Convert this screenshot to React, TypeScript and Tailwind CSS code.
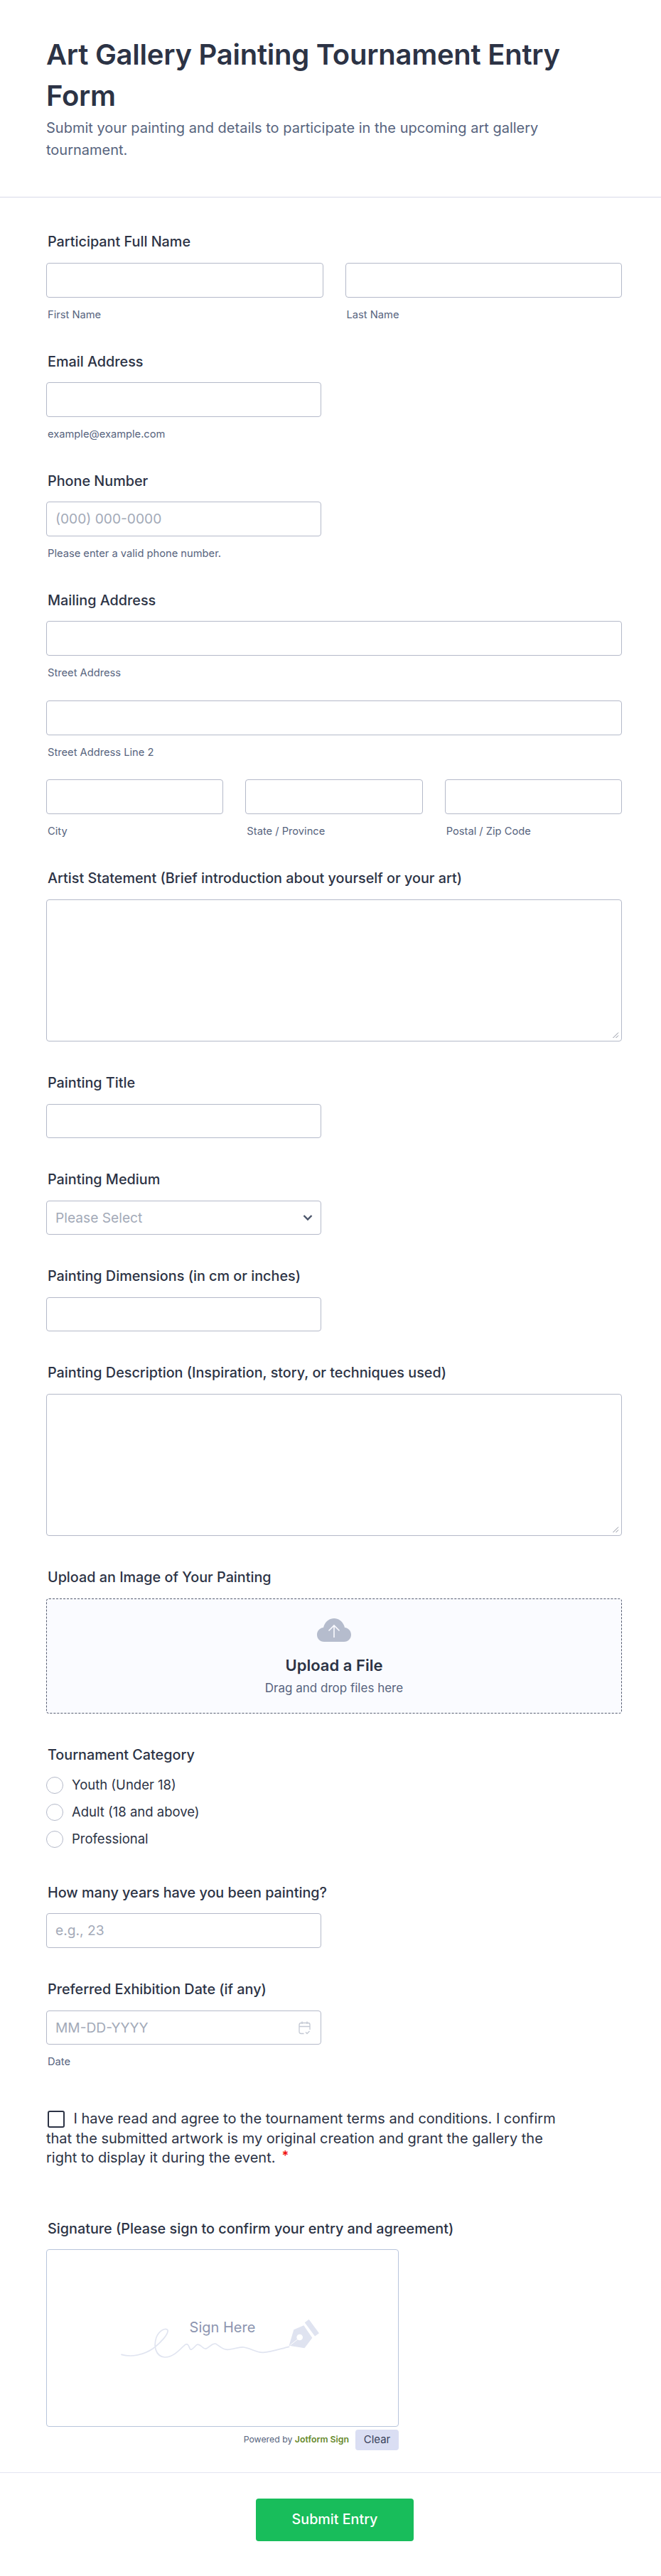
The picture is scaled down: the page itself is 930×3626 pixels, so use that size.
import React from "react";

const inter = "font-['Inter',sans-serif]";

function Label({ children, className = "" }: { children: React.ReactNode; className?: string }) {
  return <div className={`text-[19.8px] leading-[24px] font-medium text-[#2c3345] pl-[2px] ${className}`}>{children}</div>;
}
function Sub({ children, className = "" }: { children: React.ReactNode; className?: string }) {
  return <div className={`text-[14.7px] leading-[16px] text-[#57647e] pl-[2px] mt-[16px] ${className}`}>{children}</div>;
}
function Input({ className = "", placeholder }: { className?: string; placeholder?: string }) {
  return (
    <div className={`rounded-[4px] border border-[#b4b9c9] bg-white flex items-center px-[12px] text-[19.2px] text-[#a3aab8] ${className}`}>
      {placeholder}
    </div>
  );
}
function TextArea({ className = "" }: { className?: string }) {
  return (
    <div className={`relative h-[200px] rounded-[4px] border border-[#b4b9c9] bg-white ${className}`}>
      <svg className="absolute right-[3px] bottom-[3px]" width="10" height="10" viewBox="0 0 10 10">
        <path d="M9 1.5 L1.5 9 M9 5.5 L5.5 9" stroke="#8a8f9c" strokeWidth="1" />
      </svg>
    </div>
  );
}
function Radio({ text, className = "" }: { text: string; className?: string }) {
  return (
    <div className={`flex items-center h-[24px] ${className}`}>
      <div className="w-[24px] h-[24px] rounded-full border border-[#b4b9c9] bg-white" />
      <span className="ml-[12px] text-[18.5px] text-[#2c3345]">{text}</span>
    </div>
  );
}

export default function App() {
  return (
    <div className={`${inter} w-[930px] h-[3626px] bg-white overflow-hidden`}>
      <header className="pt-[48px] px-[65px] h-[278px] border-b border-[#d8dae9]">
        <h1 className="text-[40px] leading-[58px] font-semibold text-[#2c3345] tracking-[-0.25px]">
          Art Gallery Painting Tournament Entry Form
        </h1>
        <p className="w-[760px] text-[20px] leading-[31px] text-[#57647e] mt-[1px]">
          Submit your painting and details to participate in the upcoming art gallery tournament.
        </p>
      </header>

      <main className="pl-[65px] pr-[55px] pt-[50px]">
        <Label>Participant Full Name</Label>
        <div className="flex gap-[31px] mt-[18px]">
          <div className="flex-1">
            <Input className="h-[49px]" />
            <Sub>First Name</Sub>
          </div>
          <div className="flex-1">
            <Input className="h-[49px]" />
            <Sub>Last Name</Sub>
          </div>
        </div>

        <Label className="mt-[46px]">Email Address</Label>
        <Input className="h-[49px] w-[387px] mt-[17px]" />
        <Sub>example@example.com</Sub>

        <Label className="mt-[46px]">Phone Number</Label>
        <Input className="h-[49px] w-[387px] mt-[17px]" placeholder="(000) 000-0000" />
        <Sub>Please enter a valid phone number.</Sub>

        <Label className="mt-[46px]">Mailing Address</Label>
        <Input className="h-[49px] mt-[17px]" />
        <Sub>Street Address</Sub>
        <Input className="h-[49px] mt-[31px]" />
        <Sub>Street Address Line 2</Sub>
        <div className="flex gap-[31px] mt-[30px]">
          <div className="flex-1">
            <Input className="h-[49px]" />
            <Sub>City</Sub>
          </div>
          <div className="flex-1">
            <Input className="h-[49px]" />
            <Sub>State / Province</Sub>
          </div>
          <div className="flex-1">
            <Input className="h-[49px]" />
            <Sub>Postal / Zip Code</Sub>
          </div>
        </div>

        <Label className="mt-[46px]">Artist Statement (Brief introduction about yourself or your art)</Label>
        <TextArea className="mt-[18px]" />

        <Label className="mt-[46px]">Painting Title</Label>
        <Input className="h-[48px] w-[387px] mt-[18px]" />

        <Label className="mt-[46px]">Painting Medium</Label>
        <div className="relative w-[387px] mt-[18px]">
          <Input className="h-[48px]" placeholder="Please Select" />
          <svg className="absolute right-[12px] top-[19px]" width="14" height="10" viewBox="0 0 14 10" fill="none">
            <path d="M1.5 2 L7 7.5 L12.5 2" stroke="#4a5469" strokeWidth="2.4" />
          </svg>
        </div>

        <Label className="mt-[46px]">Painting Dimensions (in cm or inches)</Label>
        <Input className="h-[48px] w-[387px] mt-[18px]" />

        <Label className="mt-[46px]">Painting Description (Inspiration, story, or techniques used)</Label>
        <TextArea className="mt-[18px]" />

        <Label className="mt-[46px]">Upload an Image of Your Painting</Label>
        <div className="mt-[18px] h-[162px] rounded-[4px] border border-dashed border-[#555c70] bg-[#fafbff] flex flex-col items-center pt-[27px]">
          <svg width="48" height="33" viewBox="0 0 48 33">
            <path d="M10 33 C4 33 0 28.5 0 23 C0 17.5 4 13.5 9 13 C11 5 17 0 24 0 C31 0 37 5 39 13 C44 13.5 48 17.5 48 23 C48 28.5 44 33 38 33 Z" fill="#b5bccd" />
            <path d="M24 27 V10 M16.5 17.5 L24 10 L31.5 17.5" stroke="#fafbff" strokeWidth="1.6" fill="none" />
          </svg>
          <div className="mt-[20px] text-[22px] leading-[26px] font-semibold text-[#2c3345]">Upload a File</div>
          <div className="mt-[8px] text-[17px] leading-[22px] text-[#57647e]">Drag and drop files here</div>
        </div>

        <Label className="mt-[46px]">Tournament Category</Label>
        <div className="mt-[19px] flex flex-col gap-[14px]">
          <Radio text="Youth (Under 18)" />
          <Radio text="Adult (18 and above)" />
          <Radio text="Professional" />
        </div>

        <Label className="mt-[51px]">How many years have you been painting?</Label>
        <Input className="h-[49px] w-[387px] mt-[17px]" placeholder="e.g., 23" />

        <Label className="mt-[46px]">Preferred Exhibition Date (if any)</Label>
        <div className="relative w-[387px] mt-[18px]">
          <Input className="h-[48px]" placeholder="MM-DD-YYYY" />
          <svg className="absolute right-[15px] top-[15px]" width="17" height="19" viewBox="0 0 17 19" fill="none" stroke="#c3c8d3" strokeWidth="1.3">
            <path d="M7.5 17.5 H3.5 C2 17.5 1 16.5 1 15 V5 C1 3.5 2 2.5 3.5 2.5 H13.5 C15 2.5 16 3.5 16 5 V12" />
            <path d="M1 7.5 H16 M5 0.5 V4 M12 0.5 V4" />
            <path d="M10 15.5 L12 17.5 L15.5 14" />
          </svg>
        </div>
        <Sub>Date</Sub>

        <div className="mt-[59px] w-[735px] text-[20px] leading-[27.5px] text-[#2c3345]">
          <span className="inline-block align-[-6px] w-[24px] h-[24px] ml-[1.5px] mr-[13px] rounded-[3px] border-2 border-[#2c3345]" />
          I have read and agree to the tournament terms and conditions. I confirm that the submitted artwork is my original creation and grant the gallery the right to display it during the event.
          <span className="ml-[9px] text-[18px] leading-[10px] font-semibold text-[#f01010] align-[3px]">*</span>
        </div>

        <Label className="mt-[73px]">Signature (Please sign to confirm your entry and agreement)</Label>
        <div className="relative mt-[17px] w-[496px] h-[250px] rounded-[4px] border border-[#b8c5dc] bg-white flex justify-center">
          <div className="mt-[96px] text-[20px] leading-[26px] text-[#8d96b0]">Sign Here</div>
          <svg className="absolute left-[84px] top-[53px]" width="320" height="130" viewBox="0 0 960 390" fill="none">
            <path
              d="M63 283 C105 295 155 285 195 258 C230 232 262 195 258 180 C250 168 222 180 210 210 C198 245 205 290 245 294 C280 296 308 262 325 247 C340 232 345 240 350 255 C356 272 368 252 380 242 C395 232 405 262 420 258 C438 250 448 232 462 238 C478 248 488 262 510 262 C535 262 555 250 578 252 C608 255 630 275 660 274 C695 272 735 258 770 250"
              stroke="#e0e4f0"
              strokeWidth="5"
              strokeLinecap="round"
            />
            <path d="M770 245 L790 178 L832 160 L868 212 L835 256 Z" fill="#dfe3f0" />
            <circle cx="815" cy="210" r="13" fill="white" />
            <path d="M775 243 L808 217" stroke="white" strokeWidth="3" />
            <path d="M845 141 L888 199" stroke="#dfe3f0" strokeWidth="22" />
          </svg>
        </div>
        <div className="w-[496px] flex justify-end items-start mt-[4px]">
          <span className="mt-[6px] mr-[9px] text-[12.3px] leading-[16px] text-[#57647e]">
            Powered by <b className="font-semibold text-[#678a2d]">Jotform Sign</b>
          </span>
          <div className="w-[61px] h-[29px] rounded-[4px] bg-[#dadef3] text-[#39425a] text-[15px] flex items-center justify-center">Clear</div>
        </div>
      </main>

      <div className="mt-[31px] border-t border-[#e3e5f2] flex justify-center pl-[12px] pt-[36px]">
        <div className="w-[222px] h-[60px] rounded-[4px] bg-[#18bd5b] text-white text-[19.7px] font-medium flex items-center justify-center">
          Submit Entry
        </div>
      </div>
    </div>
  );
}
